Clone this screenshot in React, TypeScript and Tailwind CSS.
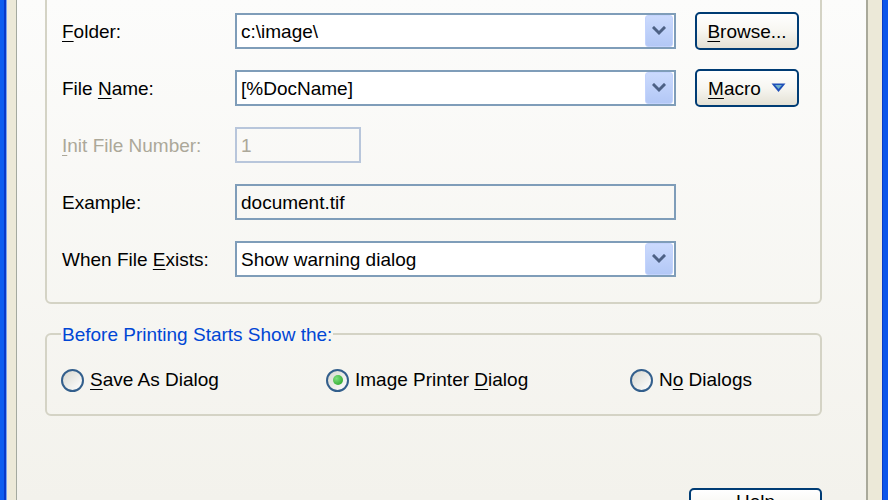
import React from "react";

const U = ({ children }: { children: React.ReactNode }) => (
  <span className="underline decoration-1 underline-offset-[3px]">{children}</span>
);

const DropBtn = () => (
  <div className="w-[28px] h-[32px] mr-[1px] rounded-[3px] border border-[#c3d3fd] bg-linear-to-b from-[#cbdafd] to-[#b3c8f6] flex items-center justify-center shrink-0">
    <svg width="14" height="10" viewBox="0 0 14 10">
      <polyline points="2,2 7,7 12,2" fill="none" stroke="#4d6185" strokeWidth="3" strokeLinecap="square" />
    </svg>
  </div>
);

const Combo = ({ text }: { text: string }) => (
  <div className="w-[441px] h-[36px] border-2 border-[#7f9db9] bg-white flex items-center justify-between">
    <span className="pl-[4px] pt-[2px] whitespace-nowrap">{text}</span>
    <DropBtn />
  </div>
);

const XPButton = ({ children, className = "" }: { children: React.ReactNode; className?: string }) => (
  <div
    className={
      "h-[38px] border-2 border-[#003c74] rounded-[5px] bg-linear-to-b from-white via-[#f7f6f1] to-[#e4e1d5] flex justify-center shrink-0 " +
      className
    }
  >
    {children}
  </div>
);

const Radio = ({ checked, children, className = "" }: { checked?: boolean; children: React.ReactNode; className?: string }) => (
  <div className={"flex items-center " + className}>
    <span className="w-[23px] h-[23px] rounded-full border-2 border-[#335f8c] bg-linear-to-br from-[#d8d8d0] to-white flex items-center justify-center shrink-0">
      {checked && (
        <span className="w-[10px] h-[10px] rounded-full bg-[radial-gradient(circle_at_35%_35%,#7ee07e,#1f9e1f)]" />
      )}
    </span>
    <span className="ml-[6px] whitespace-nowrap">{children}</span>
  </div>
);

export default function App() {
  return (
    <div className="w-[888px] h-[500px] overflow-hidden flex font-['Liberation_Sans',Arial,sans-serif] text-[19px] leading-[22px] text-black">
      {/* left frame */}
      <div className="w-[4px] bg-[#0c5df0] shrink-0" />
      <div className="w-[2px] bg-[#0739c9] shrink-0" />
      <div className="w-[1px] bg-[#7aa3ee] shrink-0" />
      <div className="w-[9px] bg-[#ece9d8] shrink-0" />

      {/* tab page */}
      <div className="w-[852px] h-full shrink-0 border-l border-r-2 border-l-[#a4a99f] border-r-[#a9a99a] bg-linear-to-b from-[#fcfcfb] to-[#f3f2ec] pl-[28px] overflow-hidden">
        {/* group 1 */}
        <div className="-mt-[30px] w-[777px] border-2 border-[#d4d3c5] rounded-[6px] pt-[40px] pb-[24px] flex flex-col gap-[19px]">
          <div className="h-[38px] flex items-center pl-[15px]">
            <div className="w-[173px] pt-[2px]">
              <U>F</U>older:
            </div>
            <Combo text="c:\image\" />
            <XPButton className="ml-[19px] w-[104px] items-center">
              <span className="pt-[2px]">
                <U>B</U>rowse...
              </span>
            </XPButton>
          </div>

          <div className="h-[38px] flex items-center pl-[15px]">
            <div className="w-[173px] pt-[2px]">
              File <U>N</U>ame:
            </div>
            <Combo text="[%DocName]" />
            <XPButton className="ml-[19px] w-[104px] items-center">
              <span className="pt-[2px]">
                <U>M</U>acro
              </span>
              <svg width="15" height="10" viewBox="0 0 15 10" className="ml-[10px]">
                <polygon points="0.5,0.5 14.5,0.5 7.5,9" fill="#1f4fb8" />
                <polygon points="4,2 11,2 7.5,6" fill="#6fb0c9" />
              </svg>
            </XPButton>
          </div>

          <div className="h-[38px] flex items-center pl-[15px]">
            <div className="w-[173px] pt-[2px] text-[#aca899]">
              <U>I</U>nit File Number:
            </div>
            <div className="w-[126px] h-[36px] border-2 border-[#b8c6db] flex items-center pl-[4px] pt-[2px] text-[#aca899]">1</div>
          </div>

          <div className="h-[38px] flex items-center pl-[15px]">
            <div className="w-[173px] pt-[2px]">Example:</div>
            <div className="w-[441px] h-[36px] border-2 border-[#7f9db9] flex items-center pl-[4px] pt-[2px]">document.tif</div>
          </div>

          <div className="h-[38px] flex items-center pl-[15px]">
            <div className="w-[173px] pt-[2px] whitespace-nowrap">
              When File <U>E</U>xists:
            </div>
            <Combo text="Show warning dialog" />
          </div>
        </div>

        {/* group 2 */}
        <fieldset className="mt-[18px] w-[777px] border-2 border-[#d4d3c5] rounded-[6px] px-[14px] pb-[19px]">
          <legend className="px-[1px] pt-[2px] text-[#0046d5] leading-[22px]">Before Printing Starts Show the:</legend>
          <div className="mt-[19px] h-[30px] flex items-center">
            <Radio className="w-[265px]">
              <U>S</U>ave As Dialog
            </Radio>
            <Radio checked className="w-[304px]">
              Image Printer <U>D</U>ialog
            </Radio>
            <Radio>
              N<U>o</U> Dialogs
            </Radio>
          </div>
        </fieldset>

        <div className="w-[777px] flex justify-end mt-[72px]">
          <XPButton className="w-[133px] items-start">
            <span className="pt-[1px]">
              <U>H</U>elp
            </span>
          </XPButton>
        </div>
      </div>

      {/* right frame */}
      <div className="w-[14px] bg-[#ece9d8] shrink-0" />
      <div className="w-[1px] bg-[#0a3cc8] shrink-0" />
      <div className="w-[5px] bg-[#0c56ea] shrink-0" />
    </div>
  );
}
